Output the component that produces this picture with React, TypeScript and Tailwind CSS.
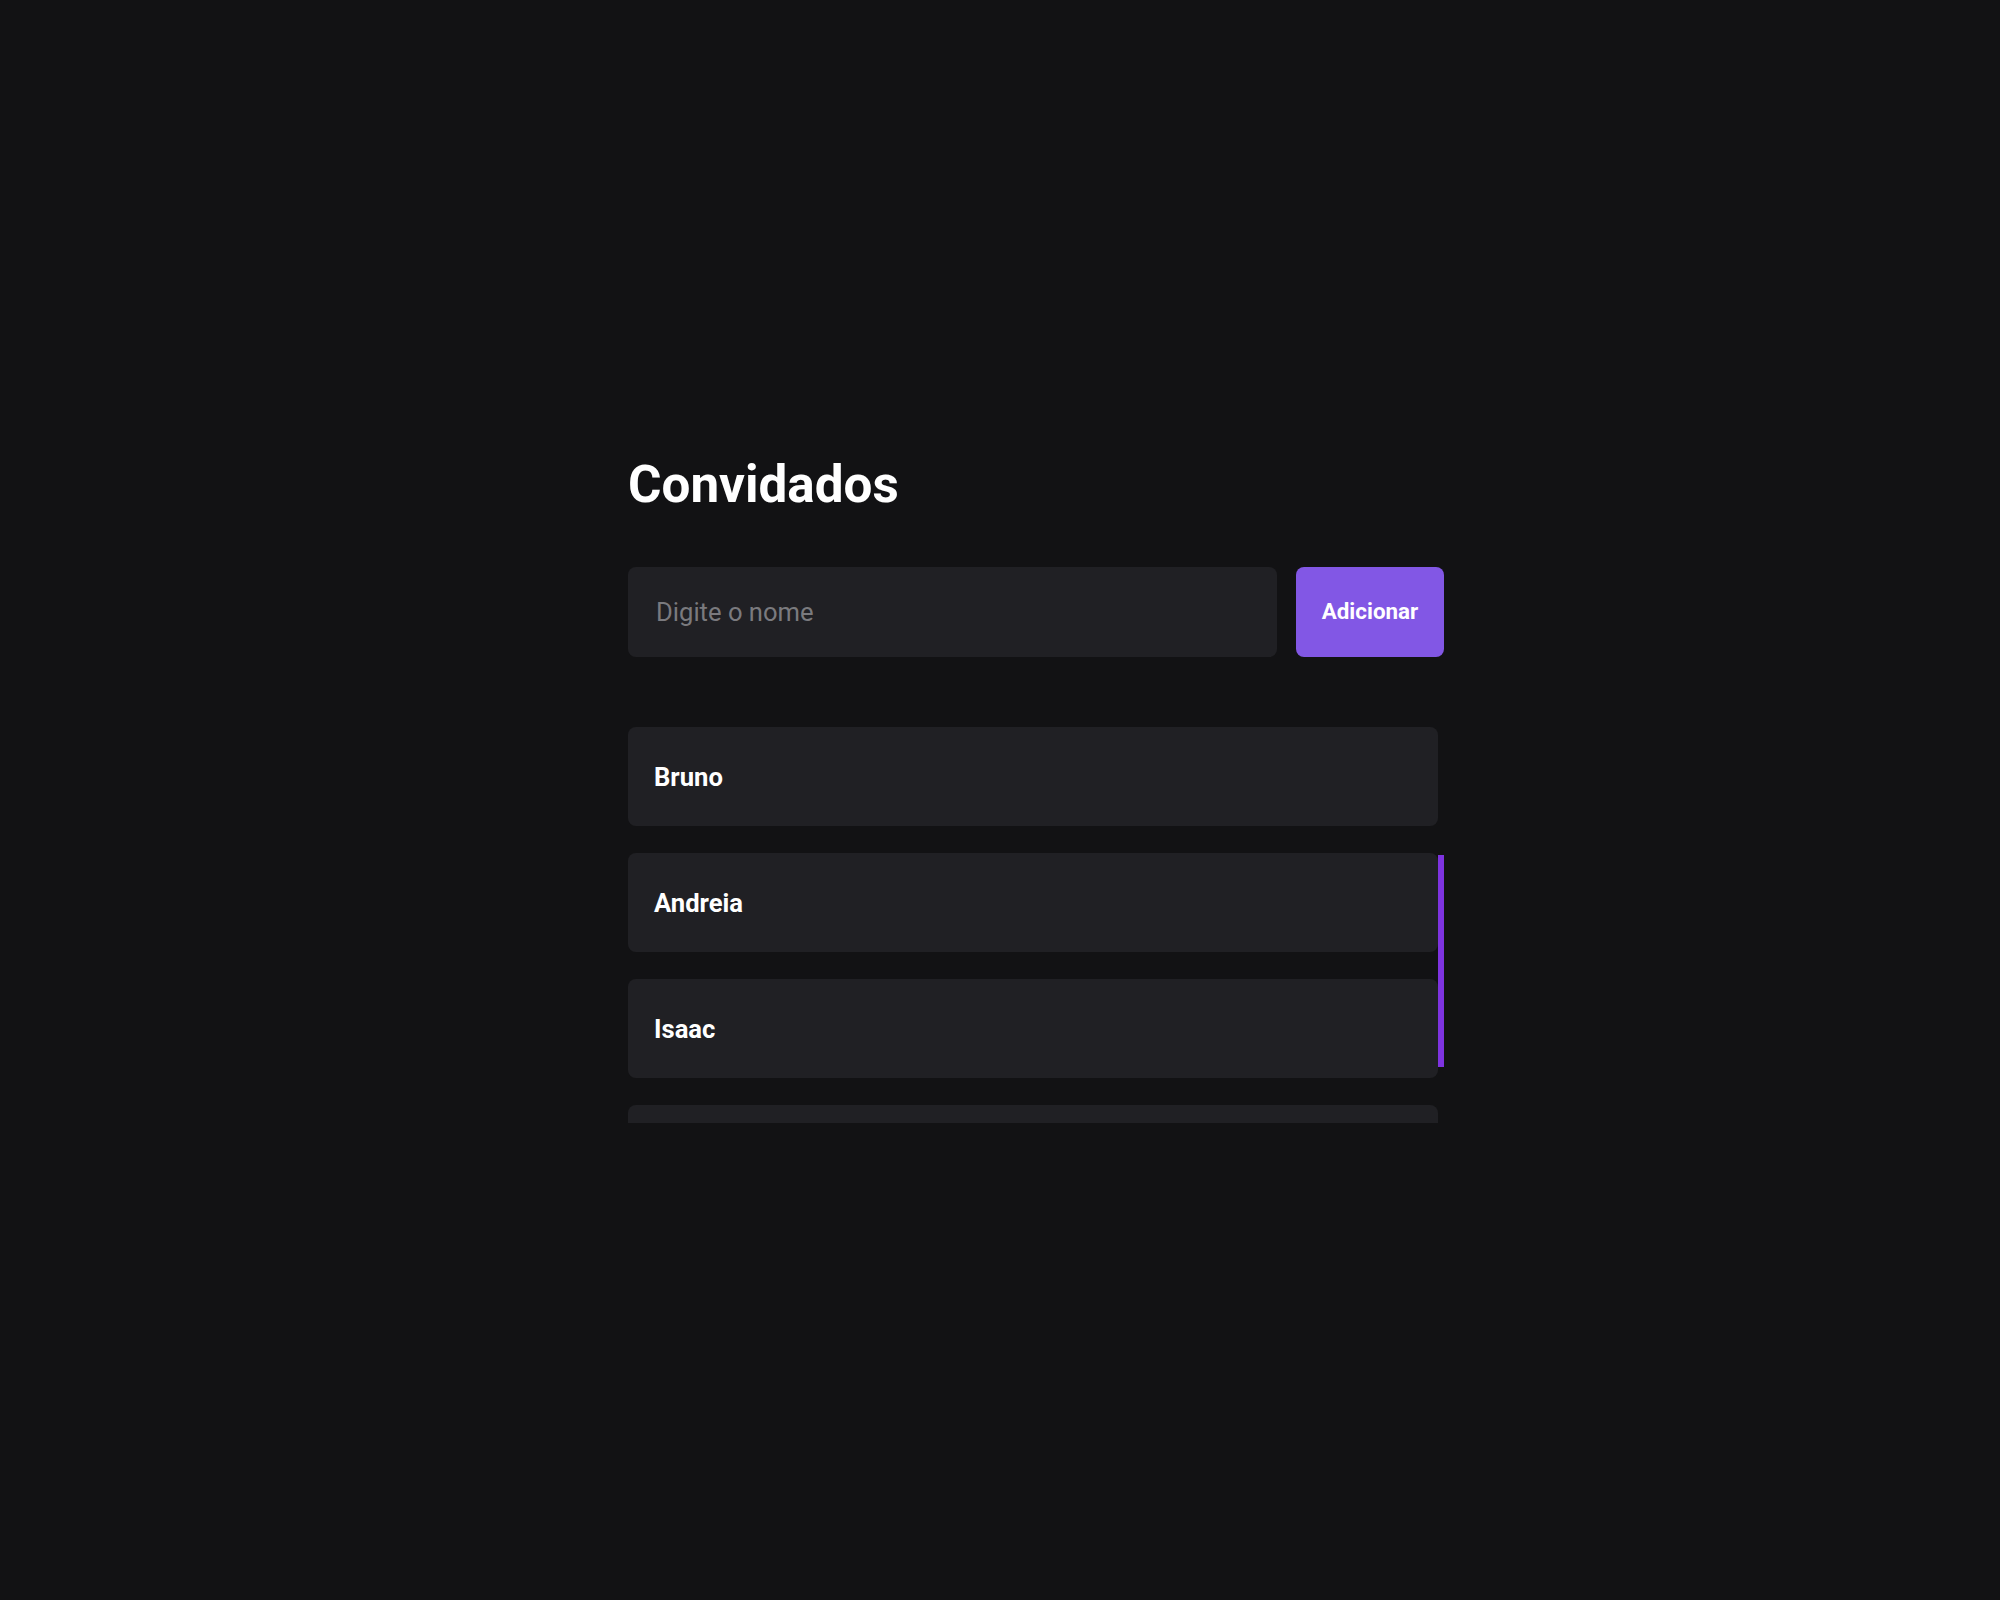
const guests = ["Bruno", "Andreia", "Isaac"];

function GuestCard({ name }: { name?: string }) {
  return (
    <li className="flex h-[99px] w-full shrink-0 items-center rounded-[8px] bg-[#202024] px-[26px] pt-[2px]">
      {name && <strong className="text-[25.6px] font-bold text-white">{name}</strong>}
    </li>
  );
}

export default function App() {
  return (
    <div className="min-h-screen bg-[#121214] pl-[628px] pt-[455px] font-['Roboto',sans-serif]">
      <main className="flex w-[816px] flex-col">
        <h1 className="text-[51.2px] font-bold leading-[60px] text-white">Convidados</h1>

        <form className="mt-[52px] flex gap-[19px]" onSubmit={(e) => e.preventDefault()}>
          <input
            type="text"
            placeholder="Digite o nome"
            className="h-[90px] flex-1 rounded-[8px] bg-[#202024] px-[28px] text-[25.6px] text-white outline-none placeholder:text-[#7a7a7e]"
          />
          <button
            type="submit"
            className="h-[90px] w-[148px] rounded-[8px] bg-[#8257e5] text-[22.4px] font-bold text-white"
          >
            Adicionar
          </button>
        </form>

        <div className="mt-[70px] flex">
          <ul className="flex h-[396px] w-[810px] flex-col gap-[27px] overflow-hidden">
            {guests.map((name) => (
              <GuestCard key={name} name={name} />
            ))}
            <GuestCard />
          </ul>
          <div className="w-[6px] pt-[128px]">
            <div className="h-[212px] w-full bg-[#7e33e0]" />
          </div>
        </div>
      </main>
    </div>
  );
}
